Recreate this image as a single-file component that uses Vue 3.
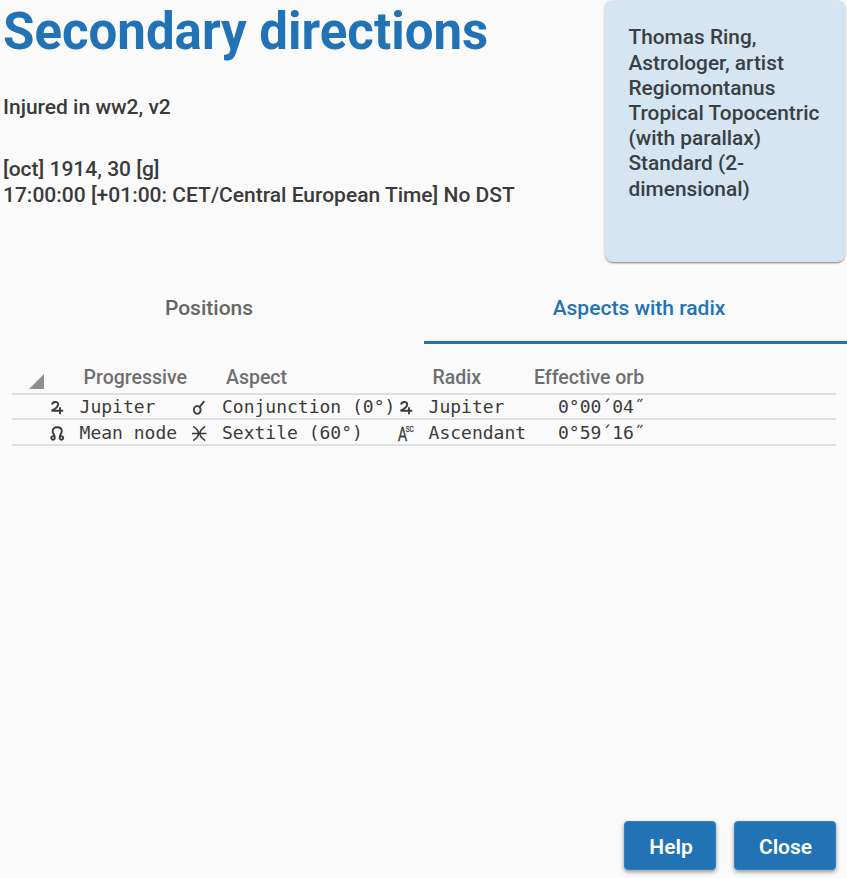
<script setup>
const rows = [
  { icon: 'jupiter', name: 'Jupiter', aspectIcon: 'conjunction', aspect: 'Conjunction (0°)', radixIcon: 'jupiter', radix: 'Jupiter', orb: '0°00´04˝' },
  { icon: 'node', name: 'Mean node', aspectIcon: 'sextile', aspect: 'Sextile (60°)', radixIcon: 'asc', radix: 'Ascendant', orb: '0°59´16˝' },
]
const icons = {
  jupiter: 'M2 4.5C2.6 1.4 8.2 .9 8.2 4.2C8.2 6.8 5.2 8.9 1.6 10.7H13.2M10 7.2V14.2',
  node: 'M4.4 10.8C5.4 9.2 2.6 8 2.6 5.2C2.6 2.4 4.8 1.2 7.2 1.2S11.8 2.4 11.8 5.2C11.8 8 9 9.2 10 10.8M3 10.1a1.8 1.8 0 1 0 .1 0M11.4 10.1a1.8 1.8 0 1 0 .1 0',
  conjunction: 'M5.2 5.9a3.4 4 0 1 0 .1 0M7.6 7L12.2 1.2',
  sextile: 'M0 7.5H14.4M1.2 .4Q11.8 7.5 1.2 14.6M13.2 .4Q2.6 7.5 13.2 14.6',
}
</script>

<template>
  <main class="page">
    <header class="top">
      <div class="intro">
        <h1>Secondary directions</h1>
        <p class="event">Injured in ww2, v2</p>
        <p class="date">[oct] 1914, 30 [g]<br />17:00:00 [+01:00: CET/Central European Time] No DST</p>
      </div>
      <aside class="card">Thomas Ring,<br />Astrologer, artist<br />Regiomontanus<br />Tropical Topocentric<br />(with parallax)<br />Standard (2-<br />dimensional)</aside>
    </header>
    <nav class="tabs">
      <div class="tab"><span class="positions">Positions</span></div>
      <div class="tab active"><span class="aspects">Aspects with radix</span></div>
    </nav>
    <section class="table">
      <div class="row head">
        <span class="corner"></span>
        <span class="h-name">Progressive</span>
        <span></span>
        <span class="h-aspect">Aspect</span>
        <span></span>
        <span class="h-radix">Radix</span>
        <span class="h-orb">Effective orb</span>
      </div>
      <div v-for="row in rows" :key="row.name" class="row data">
        <span class="symbol first"><svg class="glyph" viewBox="0 0 15 15"><path :d="icons[row.icon]" /></svg></span>
        <span>{{ row.name }}</span>
        <span class="symbol"><svg class="glyph" :class="{ thin: row.aspectIcon === 'sextile' }" viewBox="0 0 15 15"><path :d="icons[row.aspectIcon]" /></svg></span>
        <span>{{ row.aspect }}</span>
        <span class="symbol">
          <span v-if="row.radixIcon === 'asc'" class="asc">A<sup>SC</sup></span>
          <svg v-else class="glyph radix-glyph" viewBox="0 0 15 15"><path :d="icons[row.radixIcon]" /></svg>
        </span>
        <span>{{ row.radix }}</span>
        <span class="orb">{{ row.orb }}</span>
      </div>
    </section>
    <footer class="actions">
      <button class="help">Help</button>
      <button class="close">Close</button>
    </footer>
  </main>
</template>

<style>
body {
  background: #fafafa;
}
</style>

<style scoped>
.page {
  box-sizing: border-box;
  width: 847px;
  height: 878px;
  overflow: hidden;
  display: flex;
  flex-direction: column;
  background: #fafafa;
  color: #3b3b3b;
  font-family: Roboto, "Liberation Sans", sans-serif;
  font-weight: 500;
  font-size: 20.85px;
  line-height: 25px;
}
.top {
  display: flex;
  justify-content: space-between;
  height: 275px;
  padding-right: 2.5px;
}
.intro {
  padding-left: 3px;
  font-size: 21px;
  white-space: nowrap;
}
h1 {
  margin: 0;
  font-size: 51px;
  line-height: 64px;
  font-weight: 700;
  color: #2173b6;
}
.event {
  margin: 31px 0 36px;
}
.date {
  margin: 0;
  line-height: 26px;
}
.card {
  box-sizing: border-box;
  width: 240px;
  height: 261px;
  padding: 24.4px 0 0 24px;
  margin-top: 1px;
  border-radius: 8px;
  background: #d5e5f2;
  box-shadow: 0 2px 2px -1px rgba(0, 0, 0, 0.42), 0 0 3px rgba(0, 0, 0, 0.25);
  color: #3a3f43;
  line-height: 25.2px;
  white-space: nowrap;
}
.tabs {
  display: grid;
  grid-template-columns: 424px 423px;
  height: 69px;
}
.tab {
  box-sizing: border-box;
  display: flex;
  justify-content: center;
  padding-top: 21px;
  color: #666;
  font-size: 21px;
  white-space: nowrap;
}
.positions {
  margin-right: 6px;
}
.aspects {
  margin-left: 7px;
}
.active {
  color: #2173b6;
  border-bottom: 3px solid #2173b6;
}
.table {
  margin: 19px 11px 0 12px;
}
.row {
  box-sizing: border-box;
  display: grid;
  grid-template-columns: 67.6px 112.4px 30px 176px 30.6px 105.4px 1fr;
  white-space: pre;
  border-bottom: 2px solid #e0e0e0;
}
.head {
  height: 32px;
  color: #6f6f6f;
  font-weight: 500;
  font-size: 19.5px;
  line-height: 30px;
}
.corner {
  width: 0;
  height: 0;
  margin: 11px 0 0 17px;
  border-left: 15px solid transparent;
  border-bottom: 15px solid #909090;
}
.h-name,
.h-aspect,
.h-radix {
  padding-left: 4px;
}
.data {
  height: 25px;
  font-family: "DejaVu Sans Mono", monospace;
  font-weight: 400;
  font-size: 18px;
  line-height: 23px;
}
.data + .data {
  height: 26px;
  line-height: 25px;
}
.symbol {
  display: flex;
  align-items: center;
}
.first {
  padding-left: 38px;
}
.glyph {
  width: 15px;
  height: 15px;
  margin-top: 2px;
  overflow: visible;
  fill: none;
  stroke: #3b3b3b;
  stroke-width: 1.9;
}
.radix-glyph {
  margin-left: 1px;
}
.thin {
  stroke-width: 1.6;
}
.asc {
  display: flex;
  align-items: flex-start;
  margin-top: 2px;
  font-family: "Liberation Sans", sans-serif;
  font-size: 20px;
  line-height: 18px;
  transform: scaleX(0.68);
  transform-origin: left;
  -webkit-text-stroke: 0.3px #3b3b3b;
}
.asc sup {
  margin-left: -2px;
  font-size: 8.5px;
  line-height: 8px;
}
.orb {
  padding-left: 24px;
}
.actions {
  display: flex;
  justify-content: flex-end;
  gap: 18px;
  margin-top: auto;
  padding: 0 11px 8px 0;
}
button {
  height: 49px;
  padding: 3px 0 0;
  border: 1px solid #347fbc;
  border-radius: 4px;
  background: #2173b6;
  box-shadow: 0 2px 4px rgba(0, 0, 0, 0.4);
  color: #fff;
  font: 600 21px/25px Roboto, sans-serif;
}
.help {
  width: 92px;
  padding-left: 2px;
}
.close {
  width: 102px;
  padding-left: 1px;
}
</style>
